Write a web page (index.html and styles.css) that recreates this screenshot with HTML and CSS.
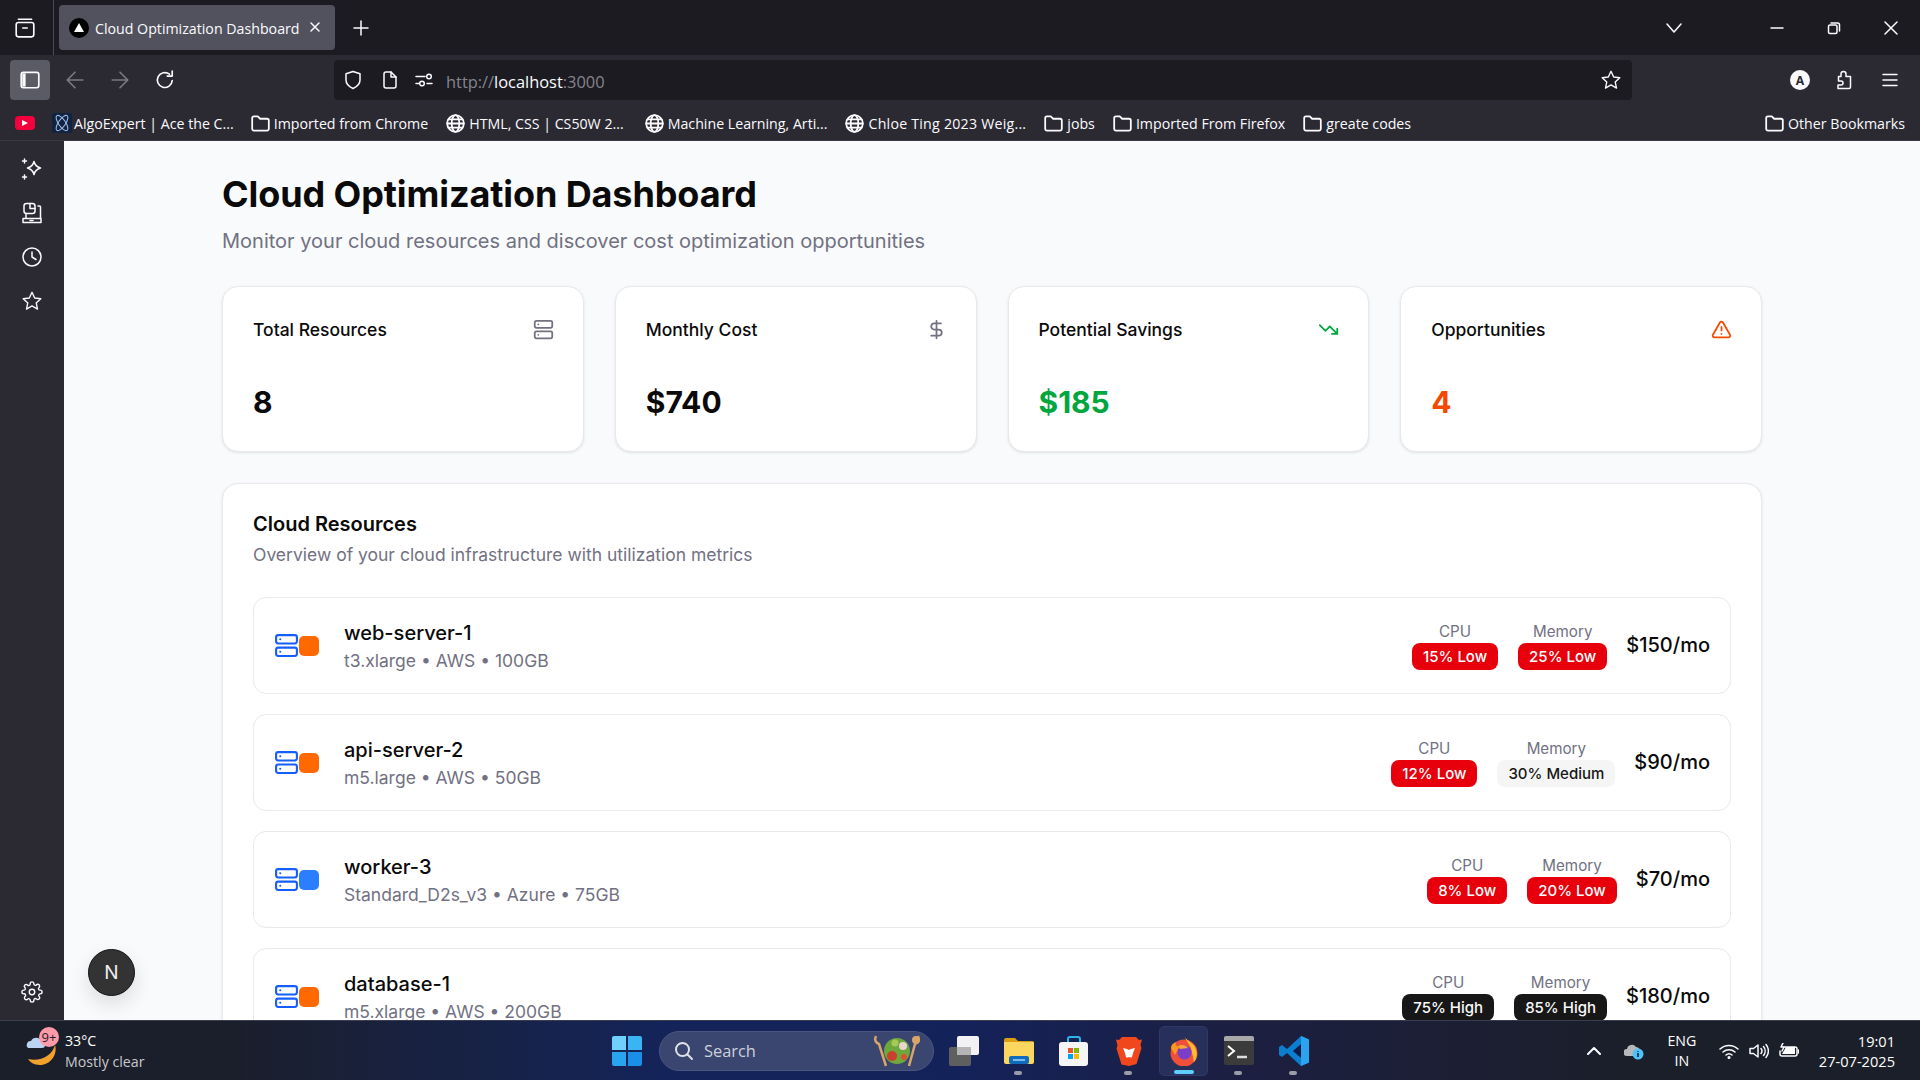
FILE: index.html
```html
<!DOCTYPE html>
<html lang="en">
<head>
	<meta charset="UTF-8">
	<title>Cloud Optimization Dashboard</title>
	<link rel="stylesheet" href="styles.css">
</head>
<body>
	<svg class="defs" width="0" height="0">
		<symbol id="server" viewBox="0 0 24 24"><rect x="2" y="2" width="20" height="8" rx="2"/><rect x="2" y="14" width="20" height="8" rx="2"/><path d="M6 6h.01M6 18h.01"/></symbol>
		<symbol id="folder" viewBox="0 0 16 16"><path d="M1 3.500A1.500 1.500 0 0 1 2.500 2h3.200l2 2h5.800A1.500 1.500 0 0 1 15 5.500v7a1.500 1.500 0 0 1-1.500 1.500h-11A1.500 1.500 0 0 1 1 12.500z"/></symbol>
		<symbol id="globe" viewBox="0 0 16 16"><circle cx="8" cy="8" r="7"/><ellipse cx="8" cy="8" rx="3.200" ry="7"/><path d="M1 8h14M2 4.500h12M2 11.500h12"/></symbol>
		<symbol id="star" viewBox="0 0 24 24"><path d="M12 2.500l2.900 6.200 6.700.800-5 4.600 1.400 6.700-6-3.400-6 3.400 1.400-6.700-5-4.600 6.700-.800z"/></symbol>
	</svg>

	<div class="tabbar">
		<svg class="ico tab-list" viewBox="0 0 20 20"><rect x="2" y="5" width="16" height="13" rx="2"/><path d="M4 2h12M8 10h4"/></svg>
		<div class="tab">
			<span class="favicon"><i></i></span>
			<span class="tab-title">Cloud Optimization Dashboard</span>
			<svg class="ico tab-close" viewBox="0 0 12 12"><path d="M2 2l8 8M10 2l-8 8"/></svg>
		</div>
		<svg class="ico new-tab" viewBox="0 0 16 16"><path d="M8 1v14M1 8h14"/></svg>
		<svg class="ico all-tabs" viewBox="0 0 16 16"><path d="M1 4l7 8 7-8"/></svg>
		<svg class="ico win-min" viewBox="0 0 14 14"><path d="M1 7h12"/></svg>
		<svg class="ico win-max" viewBox="0 0 14 14"><rect x="1.500" y="4" width="8.500" height="8.500" rx="1.500"/><path d="M4 2h6.500A2 2 0 0 1 12.500 4v6"/></svg>
		<svg class="ico win-close" viewBox="0 0 14 14"><path d="M1 1l12 12M13 1L1 13"/></svg>
	</div>

	<div class="navbar">
		<span class="side-toggle"><svg class="ico" viewBox="0 0 20 20"><rect x="2" y="3" width="16" height="14" rx="2"/><rect x="3" y="4" width="3" height="12" class="solid"/></svg></span>
		<svg class="ico nav-btn dim" viewBox="0 0 18 18"><path d="M16 9H2M9 2L2 9l7 7"/></svg>
		<svg class="ico nav-btn dim" viewBox="0 0 18 18"><path d="M2 9h14M9 2l7 7-7 7"/></svg>
		<svg class="ico nav-btn" viewBox="0 0 18 18"><path d="M15.500 9.500A6.700 6.700 0 1 1 13 3.800M15.500 1v4.500H11"/></svg>
		<div class="urlbar">
			<svg class="ico u-shield" viewBox="0 0 18 20"><path d="M9 1.500l7 2.300v6.200c0 4-3.200 6.800-7 8.500-3.800-1.700-7-4.500-7-8.500V3.800z"/></svg>
			<svg class="ico u-page" viewBox="0 0 16 18"><path d="M2 3a2 2 0 0 1 2-2h5l5 5v9a2 2 0 0 1-2 2H4a2 2 0 0 1-2-2z"/><path d="M9 1v5h5"/></svg>
			<svg class="ico u-perm" viewBox="0 0 18 14"><path d="M1 3.500h9M1 10.500h3M12 10.500h5"/><circle cx="14" cy="3.500" r="2.300"/><circle cx="7" cy="10.500" r="2.300"/></svg>
			<span class="url"><span>http://</span>localhost<span>:3000</span></span>
			<svg class="ico u-star"><use href="#star"/></svg>
		</div>
		<span class="account">A</span>
		<svg class="ico nav-ext" viewBox="0 0 18 20"><path d="M2 18.500h11a1.500 1.500 0 0 0 1.500-1.500V6.500H10V4a2.500 2.500 0 0 0-5 0v2.500H2.500V11H5a2 2 0 0 1 0 4H2z"/></svg>
		<svg class="ico nav-menu" viewBox="0 0 16 14"><path d="M1 1.500h14M1 7h14M1 12.500h14"/></svg>
	</div>

	<div class="bookmarks">
		<span class="yt"><i></i></span>
		<span class="bm bm-algo"><svg class="algo" viewBox="0 0 20 20"><rect width="20" height="20" rx="2" fill="#10243f"/><g fill="none" stroke="#9fb9e6" stroke-width="1.100"><ellipse cx="10" cy="10" rx="3.500" ry="9" transform="rotate(35 10 10)"/><ellipse cx="10" cy="10" rx="3.500" ry="9" transform="rotate(-35 10 10)"/></g></svg>AlgoExpert | Ace the C...</span>
		<span class="bm"><svg class="ico bm-ico"><use href="#folder"/></svg>Imported from Chrome</span>
		<span class="bm bm-html"><svg class="ico bm-ico"><use href="#globe"/></svg>HTML, CSS | CS50W 2...</span>
		<span class="bm"><svg class="ico bm-ico"><use href="#globe"/></svg>Machine Learning, Arti...</span>
		<span class="bm bm-chloe"><svg class="ico bm-ico"><use href="#globe"/></svg>Chloe Ting 2023 Weig...</span>
		<span class="bm"><svg class="ico bm-ico"><use href="#folder"/></svg>jobs</span>
		<span class="bm"><svg class="ico bm-ico"><use href="#folder"/></svg>Imported From Firefox</span>
		<span class="bm"><svg class="ico bm-ico"><use href="#folder"/></svg>greate codes</span>
		<span class="bm bm-other"><svg class="ico bm-ico"><use href="#folder"/></svg>Other Bookmarks</span>
	</div>

	<div class="window">
		<div class="sidebar">
			<svg class="ico side-ico" viewBox="0 0 22 22"><path d="M13 3.500c.8 3.700 2.400 5.300 6.500 6.500-4.100 1.200-5.700 2.800-6.500 6.500-.8-3.700-2.400-5.300-6.500-6.500 4.100-1.200 5.700-2.800 6.500-6.500zM3.500 1v4M1.500 3h4M3.500 17v4M1.500 19h4"/></svg>
			<svg class="ico side-ico" viewBox="0 0 22 22"><rect x="3" y="1.500" width="11" height="10" rx="2.500"/><path d="M9 1.500v5H14M17 4h1.500a1 1 0 0 1 1 1v11M5 11.500V16"/><path d="M2 20.500h18v-4H2z"/><path d="M9 18.500h3"/></svg>
			<svg class="ico side-ico" viewBox="0 0 22 22"><circle cx="11" cy="11" r="9"/><path d="M11 6v5l4 2.500"/></svg>
			<svg class="ico side-ico"><use href="#star"/></svg>
			<svg class="ico side-ico side-gear" viewBox="0 0 24 24"><circle cx="12" cy="12" r="3"/><path d="M19.400 15a1.650 1.650 0 0 0 .33 1.820l.06.06a2 2 0 1 1-2.830 2.830l-.06-.06a1.650 1.650 0 0 0-2.820 1.170V21a2 2 0 0 1-4 0v-.09a1.650 1.650 0 0 0-2.820-1.170l-.06.06a2 2 0 1 1-2.830-2.830l.06-.06A1.650 1.650 0 0 0 3.090 14H3a2 2 0 0 1 0-4h.09a1.650 1.650 0 0 0 1.170-2.820l-.06-.06a2 2 0 1 1 2.830-2.830l.06.06A1.650 1.650 0 0 0 10 3.090V3a2 2 0 0 1 4 0v.09a1.650 1.650 0 0 0 2.820 1.170l.06-.06a2 2 0 1 1 2.830 2.830l-.06.06A1.650 1.650 0 0 0 20.910 10H21a2 2 0 0 1 0 4h-.09a1.650 1.650 0 0 0-1.510 1z"/></svg>
		</div>

		<div class="page">
			<div class="container">
				<h1>Cloud Optimization Dashboard</h1>
				<p class="lead">Monitor your cloud resources and discover cost optimization opportunities</p>

				<div class="stats">
					<div class="card stat">
						<div class="stat-head">Total Resources<svg class="lu gray"><use href="#server"/></svg></div>
						<div class="stat-value">8</div>
					</div>
					<div class="card stat">
						<div class="stat-head">Monthly Cost<svg class="lu gray" viewBox="0 0 24 24"><path d="M12 2v20M17 5H9.500a3.500 3.500 0 0 0 0 7h5a3.500 3.500 0 0 1 0 7H6"/></svg></div>
						<div class="stat-value">$740</div>
					</div>
					<div class="card stat">
						<div class="stat-head">Potential Savings<svg class="lu green" viewBox="0 0 24 24"><path d="M22 17l-8.500-8.500-5 5L2 7M16 17h6v-6"/></svg></div>
						<div class="stat-value green-text">$185</div>
					</div>
					<div class="card stat">
						<div class="stat-head">Opportunities<svg class="lu orange" viewBox="0 0 24 24"><path d="M21.700 18l-8-14a2 2 0 0 0-3.500 0l-8 14A2 2 0 0 0 4 21h16a2 2 0 0 0 1.700-3zM12 9v4M12 17h.01"/></svg></div>
						<div class="stat-value orange-text">4</div>
					</div>
				</div>

				<div class="card resources">
					<h2>Cloud Resources</h2>
					<p class="sub">Overview of your cloud infrastructure with utilization metrics</p>

					<div class="row">
						<svg class="lu blue row-server"><use href="#server"/></svg>
						<span class="provider aws"></span>
						<div class="row-info">
							<div class="row-name">web-server-1</div>
							<div class="row-meta">t3.xlarge • AWS • 100GB</div>
						</div>
						<div class="metric"><span>CPU</span><b class="badge low">15% Low</b></div>
						<div class="metric"><span>Memory</span><b class="badge low">25% Low</b></div>
						<div class="price">$150/mo</div>
					</div>

					<div class="row">
						<svg class="lu blue row-server"><use href="#server"/></svg>
						<span class="provider aws"></span>
						<div class="row-info">
							<div class="row-name">api-server-2</div>
							<div class="row-meta">m5.large • AWS • 50GB</div>
						</div>
						<div class="metric"><span>CPU</span><b class="badge low">12% Low</b></div>
						<div class="metric"><span>Memory</span><b class="badge medium">30% Medium</b></div>
						<div class="price">$90/mo</div>
					</div>

					<div class="row">
						<svg class="lu blue row-server"><use href="#server"/></svg>
						<span class="provider azure"></span>
						<div class="row-info">
							<div class="row-name">worker-3</div>
							<div class="row-meta">Standard_D2s_v3 • Azure • 75GB</div>
						</div>
						<div class="metric"><span>CPU</span><b class="badge low">8% Low</b></div>
						<div class="metric"><span>Memory</span><b class="badge low">20% Low</b></div>
						<div class="price">$70/mo</div>
					</div>

					<div class="row">
						<svg class="lu blue row-server"><use href="#server"/></svg>
						<span class="provider aws"></span>
						<div class="row-info">
							<div class="row-name">database-1</div>
							<div class="row-meta">m5.xlarge • AWS • 200GB</div>
						</div>
						<div class="metric"><span>CPU</span><b class="badge high">75% High</b></div>
						<div class="metric"><span>Memory</span><b class="badge high">85% High</b></div>
						<div class="price">$180/mo</div>
					</div>
				</div>
			</div>
			<span class="next-badge">N</span>
		</div>
	</div>

	<div class="taskbar">
		<div class="weather">
			<svg class="weather-ico" viewBox="0 0 36 36"><path d="M31 12c3 10-5 20-15 20-6 0-10-3-12-6 12 3 24-3 27-14z" fill="#f2a22c"/><path d="M4 15a4 4 0 0 1 3-7 6 6 0 0 1 11 1 3 3 0 0 1 0 6z" fill="#bcd2f2"/></svg>
			<span class="weather-badge">9+</span>
			<div class="weather-text"><div>33°C</div><div class="weather-sub">Mostly clear</div></div>
		</div>

		<div class="task-center">
			<svg class="t-start" viewBox="0 0 30 30"><path d="M0 2a2 2 0 0 1 2-2h12v14H0z" fill="#6fd0fb"/><path d="M16 0h12a2 2 0 0 1 2 2v12H16z" fill="#3ab4f5"/><path d="M0 16h14v14H2a2 2 0 0 1-2-2z" fill="#29a4ef"/><path d="M16 16h14v12a2 2 0 0 1-2 2H16z" fill="#1a8fe8"/></svg>
			<div class="search">
				<svg class="search-ico" viewBox="0 0 20 20"><circle cx="8.500" cy="8.500" r="6.500"/><path d="M13.500 13.500L18 18"/></svg>
				<span>Search</span>
				<svg class="salad" viewBox="0 0 52 34"><path d="M5 2c-2 4 0 7 3 8l7 22" stroke="#d9a46a" stroke-width="2.500" fill="none"/><path d="M47 2c2 4-1 8-3 8l-6 22" stroke="#d9a46a" stroke-width="2.500" fill="none"/><circle cx="45" cy="6" r="4" fill="#d9a46a"/><circle cx="26" cy="17" r="13" fill="#6ea83c"/><circle cx="21" cy="22" r="5" fill="#c9402c"/><circle cx="32" cy="12" r="4" fill="#e8d5d0"/><circle cx="33" cy="23" r="3" fill="#e0512f"/><circle cx="24" cy="9" r="3.500" fill="#a8c85a"/></svg>
			</div>
			<div class="t-app">
				<svg viewBox="0 0 30 30"><rect x="0" y="11" width="22" height="19" rx="2" fill="#5f5f5f"/><rect x="8" y="0" width="22" height="19" rx="2" fill="#f2f2f4"/><rect x="8" y="11" width="14" height="8" fill="#b5b5b5"/></svg>
			</div>
			<div class="t-app open">
				<svg viewBox="0 0 30 30"><path d="M0 4a2 2 0 0 1 2-2h9l3 3h14a2 2 0 0 1 2 2v3H0z" fill="#d9a016"/><path d="M0 6h30v20a2 2 0 0 1-2 2H2a2 2 0 0 1-2-2z" fill="#fcd75f"/><rect x="5" y="20" width="20" height="8" rx="2" fill="#0f6cbd"/><path d="M9 24h12" stroke="#9fd3f7" stroke-width="1.500"/></svg>
			</div>
			<div class="t-app">
				<svg viewBox="0 0 30 30"><path d="M9 8V3a2 2 0 0 1 2-2h8a2 2 0 0 1 2 2v5" fill="none" stroke="#2cb5e8" stroke-width="2"/><rect x="0" y="6" width="29" height="24" rx="3" fill="#f5f5f5"/><rect x="9" y="12" width="5" height="5" fill="#e8552b"/><rect x="15" y="12" width="5" height="5" fill="#7fb900"/><rect x="9" y="18" width="5" height="5" fill="#00a1f1"/><rect x="15" y="18" width="5" height="5" fill="#ffb900"/></svg>
			</div>
			<div class="t-app open">
				<svg viewBox="0 0 30 30"><path d="M8 1h14l3 3 3-.500-1.500 5.500 1 3-5 16L15 30l-7.500-1.500-5-16 1-3L2 3.500 5 4z" fill="#f1471d"/><path d="M9 12l4 1 2 1 2-1 4-1-2 5-1 4-3 3-3-3-1-4z" fill="#fff"/><path d="M12 22l3 3 3-3-3-1z" fill="#f1471d"/></svg>
			</div>
			<div class="t-app active">
				<svg viewBox="0 0 30 30"><circle cx="15" cy="17" r="13.500" fill="#f0503a"/><path d="M15 0c2 4 8 6 11 11 3 6 2 12-1 15l-3-14z" fill="#ffbd2e"/><path d="M2 12c0-3 2-5 5-6-1 3 0 4 3 5l-4 8z" fill="#ff9a1f"/><circle cx="15.500" cy="16.500" r="7" fill="#7a3fc9"/><path d="M9 10c4-2 8-1 10 2l-8 1z" fill="#ffa53a"/></svg>
			</div>
			<div class="t-app open">
				<svg viewBox="0 0 30 30"><rect width="30" height="29" rx="2" fill="#3b3b3b"/><path d="M0 2a2 2 0 0 1 2-2h26a2 2 0 0 1 2 2v3H0z" fill="#a8a8a8"/><path d="M4 10l6 5-6 5" stroke="#fff" stroke-width="2" fill="none"/><path d="M13 21h10" stroke="#ddd" stroke-width="2.500"/></svg>
			</div>
			<div class="t-app open">
				<svg viewBox="0 0 30 30"><path d="M22 0l8 3.500v23L22 30 8 17l-5 4-3-2v-8l3-2 5 4z" fill="#0a7fd0"/><path d="M22 8l-8 7 8 7z" fill="#0f1b45"/><path d="M22 0l8 3.500v23L22 30z" fill="#2ba3ee"/></svg>
			</div>
		</div>

		<div class="tray">
			<svg class="ico tray-chev" viewBox="0 0 14 8"><path d="M1 7l6-6 6 6"/></svg>
			<svg class="tray-cloud" viewBox="0 0 20 18"><path d="M3 14a3.500 3.500 0 0 1 0-7 5 5 0 0 1 9-2 4 4 0 0 1 4 5v4z" fill="#b8b8bc"/><circle cx="14" cy="12" r="5.500" fill="#4fc3f7"/><path d="M14 11v4M14 9v.8" stroke="#10202c" stroke-width="1.500"/></svg>
			<div class="tray-lang"><div>ENG</div><div>IN</div></div>
			<svg class="ico tray-wifi" viewBox="0 0 20 16"><path d="M1 6a13 13 0 0 1 18 0M4 9a9 9 0 0 1 12 0M7 12a4.500 4.500 0 0 1 6 0"/><circle cx="10" cy="14.500" r=".8"/></svg>
			<svg class="ico tray-sound" viewBox="0 0 20 16"><path d="M1 5.500h3.500L9 2v12l-4.500-3.500H1zM12 5.500a4 4 0 0 1 0 5M14.500 3.500a7 7 0 0 1 0 9M17 1.500a10 10 0 0 1 0 13"/></svg>
			<svg class="ico tray-batt" viewBox="0 0 20 16"><path d="M5 4h11a2 2 0 0 1 2 2v5a2 2 0 0 1-2 2H3a2 2 0 0 1-2-2V8"/><path d="M3 11l4-7h9v7z" fill="#fff" stroke="none"/><path d="M19.500 7v3M4 0L2 4h3L3 8"/></svg>
			<div class="clock"><div>19:01</div><div>27-07-2025</div></div>
		</div>
	</div>
</body>
</html>
```

FILE: styles.css
```css
* {
	box-sizing: border-box;
}
html, body {
	margin: 0;
	height: 100%;
	overflow: hidden;
}
body {
	display: flex;
	flex-direction: column;
	height: 1080px;
	background: #2b2a33;
	font-family: "Inter", "Liberation Sans", sans-serif;
	color: #0a0a0a;
}
.defs {
	position: absolute;
}
.ico {
	display: block;
	flex: none;
	fill: none;
	stroke: #fbfbfe;
	stroke-width: 1.5;
	stroke-linecap: round;
	stroke-linejoin: round;
}

/* browser chrome */
.tabbar {
	display: flex;
	align-items: center;
	height: 55px;
	flex: none;
	background: #1c1b22;
	color: #fbfbfe;
	font-family: "Open Sans", sans-serif;
}
.tab-list {
	width: 22px;
	height: 22px;
	margin-left: 14px;
}
.tab {
	display: flex;
	align-items: center;
	width: 276px;
	height: 45px;
	margin-left: 23px;
	padding: 0 14px 0 10px;
	background: #52525e;
	border-radius: 4px;
	font-size: 14.2px;
	position: relative;
}
.tab::before {
	content: "";
	position: absolute;
	left: -6px;
	top: -5px;
	height: 55px;
	border-left: 1px solid #4a4a52;
}
.favicon {
	display: flex;
	align-items: center;
	justify-content: center;
	width: 20px;
	height: 20px;
	margin-right: 6px;
	border-radius: 50%;
	background: #000;
}
.favicon i {
	border-left: 5px solid transparent;
	border-right: 5px solid transparent;
	border-bottom: 9px solid #fff;
}
.tab-title {
	flex: 1;
	padding-top: 2px;
	white-space: nowrap;
}
.tab-close {
	width: 12px;
	height: 12px;
	margin-top: -2px;
}
.new-tab {
	width: 16px;
	height: 16px;
	margin-left: 18px;
}
.all-tabs {
	width: 16px;
	height: 16px;
	margin-left: auto;
}
.win-min, .win-max, .win-close {
	width: 14px;
	height: 14px;
}
.win-min {
	margin-left: 88px;
}
.win-max, .win-close {
	margin-left: 43px;
}
.win-close {
	margin-right: 22px;
}

.navbar {
	display: flex;
	align-items: center;
	height: 45px;
	flex: none;
	padding-top: 5px;
	background: #2b2a33;
}
.side-toggle {
	display: flex;
	align-items: center;
	justify-content: center;
	width: 40px;
	height: 40px;
	margin-left: 10px;
	background: #5b5b66;
	border-radius: 4px;
}
.side-toggle .ico {
	width: 22px;
	height: 22px;
}
.solid {
	fill: #fbfbfe;
	stroke: none;
}
.nav-btn {
	width: 20px;
	height: 20px;
	margin-left: 25px;
}
.side-toggle + .nav-btn {
	margin-left: 15px;
}
.nav-btn.dim {
	stroke: #7a7a80;
}
.urlbar {
	display: flex;
	align-items: center;
	width: 1298px;
	height: 40px;
	margin-left: 159px;
	padding: 0 10px 0 10px;
	background: #1c1b22;
	border-radius: 4px;
	font-family: "Open Sans", sans-serif;
	font-size: 16.4px;
	color: #fbfbfe;
}
.u-shield {
	width: 18px;
	height: 20px;
}
.u-page {
	width: 16px;
	height: 18px;
	margin-left: 20px;
}
.u-perm {
	width: 18px;
	height: 14px;
	margin-left: 17px;
}
.url {
	margin-left: 13px;
	padding-top: 2px;
}
.url span {
	color: #85858b;
}
.u-star {
	width: 22px;
	height: 22px;
	margin-left: auto;
}
.account {
	display: flex;
	align-items: center;
	justify-content: center;
	width: 20px;
	height: 20px;
	margin-left: 158px;
	border-radius: 50%;
	background: #fbfbfe;
	color: #2b2a33;
	font-size: 12px;
	font-weight: 700;
}
.nav-ext {
	width: 18px;
	height: 20px;
	margin-left: 26px;
}
.nav-menu {
	width: 16px;
	height: 14px;
	margin-left: 28px;
}

.bookmarks {
	display: flex;
	align-items: center;
	gap: 18px;
	height: 40px;
	flex: none;
	padding: 6px 15px 0 15px;
	background: #2b2a33;
	font-family: "Open Sans", sans-serif;
	font-size: 14.2px;
	color: #fbfbfe;
	white-space: nowrap;
}
.yt {
	display: flex;
	align-items: center;
	justify-content: center;
	width: 20px;
	height: 14px;
	border-radius: 4px;
	background: #f5003d;
}
.yt i {
	border-left: 6px solid #fff;
	border-top: 3.5px solid transparent;
	border-bottom: 3.5px solid transparent;
}
.bm {
	display: flex;
	align-items: center;
	gap: 4px;
}
.bm-ico {
	width: 19px;
	height: 19px;
}
.algo {
	width: 20px;
	height: 20px;
}
.bm-algo {
	gap: 2px;
	margin-left: -1px;
	margin-right: -1px;
}
.bm-html {
	margin-right: 3px;
}
.bm-chloe {
	letter-spacing: 0.23px;
}
.bm-other {
	margin-left: auto;
}

/* app area */
.window {
	display: flex;
	flex: 1;
	min-height: 0;
	border-top: 1px solid #3a3944;
}
.sidebar {
	display: flex;
	flex-direction: column;
	align-items: center;
	gap: 22px;
	width: 64px;
	flex: none;
	padding-top: 17px;
	padding-bottom: 17px;
	background: #2b2a33;
}
.side-ico {
	width: 22px;
	height: 22px;
}
.side-gear {
	margin-top: auto;
}
.page {
	flex: 1;
	min-width: 0;
	overflow: hidden;
	position: relative;
	background: #f9fafb;
}
.container {
	width: 1540px;
	margin: 0 auto;
	padding-top: 31px;
}
h1 {
	margin: 0;
	font-size: 36px;
	line-height: 44px;
	font-weight: 700;
	letter-spacing: -0.1px;
}
.lead {
	margin: 11px 0 0 0;
	font-size: 20px;
	line-height: 28px;
	color: #717182;
}
.card {
	background: #fff;
	border: 1px solid #e9e9ec;
	border-radius: 16px;
	box-shadow: 0 1px 3px rgba(0,0,0,0.1);
}
.stats {
	display: grid;
	grid-template-columns: repeat(4, 1fr);
	gap: 31px;
	margin-top: 31px;
}
.stat {
	height: 166px;
	padding: 30px;
}
.stat-head {
	display: flex;
	align-items: center;
	justify-content: space-between;
	height: 22px;
	margin-top: 1px;
	font-size: 17.5px;
	font-weight: 500;
}
.stat-head .lu {
	width: 21px;
	height: 21px;
	margin-right: -1px;
}
.lu {
	display: block;
	flex: none;
	width: 22px;
	height: 22px;
	fill: none;
	stroke-width: 2;
	stroke-linecap: round;
	stroke-linejoin: round;
}
.gray {
	stroke: #717182;
}
.green {
	stroke: #00a63e;
}
.orange {
	stroke: #f54900;
}
.blue {
	stroke: #155dfc;
}
.stat-value {
	margin-top: 44px;
	font-size: 30px;
	line-height: 36px;
	font-weight: 700;
}
.green-text {
	color: #00a63e;
}
.orange-text {
	color: #f54900;
}
.resources {
	margin-top: 31px;
	padding: 30px;
	height: 800px;
}
h2 {
	margin: 0;
	font-size: 20px;
	line-height: 20px;
	font-weight: 600;
}
.sub {
	margin: 9px 0 0 0;
	font-size: 17.5px;
	line-height: 24px;
	color: #717182;
}
.row {
	display: flex;
	align-items: center;
	height: 97px;
	margin-top: 20px;
	padding: 0 20px;
	background: #fff;
	border: 1px solid #e9e9ec;
	border-radius: 13px;
}
.sub + .row {
	margin-top: 30px;
}
.row-server {
	width: 25px;
	height: 25px;
}
.provider {
	width: 20px;
	height: 20px;
	border-radius: 5px;
}
.aws {
	background: #ff6900;
}
.azure {
	background: #2b7fff;
}
.row-info {
	flex: 1;
	margin-left: 25px;
}
.row-name {
	font-size: 20px;
	line-height: 29px;
	font-weight: 500;
}
.row-meta {
	font-size: 17.5px;
	line-height: 25px;
	color: #717182;
}
.metric {
	display: flex;
	flex-direction: column;
	align-items: center;
	margin-left: 20px;
	font-size: 15.2px;
	line-height: 20px;
	color: #717182;
}
.badge {
	display: block;
	height: 27px;
	margin-top: 1px;
	padding: 0 11px;
	border-radius: 8px;
	font-size: 15px;
	line-height: 27px;
	font-weight: 500;
	white-space: nowrap;
}
.low {
	background: #e7000b;
	color: #fff;
}
.medium {
	background: #f5f5f5;
	color: #171717;
}
.high {
	background: #171717;
	color: #fafafa;
}
.price {
	margin-left: 19px;
	margin-top: -2px;
	font-size: 20px;
	font-weight: 500;
}
.next-badge {
	position: absolute;
	left: 24px;
	top: 808px;
	display: flex;
	align-items: center;
	justify-content: center;
	width: 47px;
	height: 47px;
	border-radius: 50%;
	background: #333;
	border: 1px solid #111;
	box-shadow: 0 0 0 1px rgba(255,255,255,0.1), 0 8px 20px rgba(0,0,0,0.12);
	color: #eee;
	font-size: 19px;
	font-weight: 400;
}

/* windows taskbar */
.taskbar {
	display: flex;
	align-items: center;
	height: 60px;
	flex: none;
	position: relative;
	background: linear-gradient(90deg, #1b1f2a 0%, #1b1f2c 12%, #14245a 35%, #14225a 50%, #1c1f40 65%, #1b1f2a 85%);
	border-top: 1px solid #3a3e4e;
	color: #fff;
	font-family: "Open Sans", sans-serif;
	font-size: 14.2px;
}
.weather {
	display: flex;
	align-items: center;
	width: 612px;
	padding-left: 24px;
	position: relative;
}
.weather-ico {
	width: 36px;
	height: 36px;
}
.weather-badge {
	position: absolute;
	left: 39px;
	top: -3px;
	width: 20px;
	height: 20px;
	border-radius: 50%;
	background: #ff9aa8;
	color: #1b1f2a;
	font-size: 13px;
	line-height: 20px;
	text-align: center;
}
.weather-text {
	margin-left: 5px;
	line-height: 21px;
}
.weather-sub {
	color: #c9c9cc;
}
.task-center {
	display: flex;
	align-items: center;
}
.t-start {
	width: 30px;
	height: 30px;
}
.search {
	display: flex;
	align-items: center;
	width: 275px;
	height: 40px;
	margin-left: 17px;
	padding: 0 10px 0 14px;
	border-radius: 20px;
	background: #3a4570;
	border: 1px solid #4a5580;
	font-size: 16.4px;
	color: #ccd0dc;
}
.search-ico {
	width: 20px;
	height: 20px;
	fill: none;
	stroke: #dfe2ea;
	stroke-width: 2;
	stroke-linecap: round;
}
.search span {
	margin-left: 10px;
}
.salad {
	width: 52px;
	height: 34px;
	margin-left: auto;
}
.t-app {
	display: flex;
	align-items: center;
	justify-content: center;
	width: 49px;
	height: 50px;
	margin-left: 6px;
	border-radius: 5px;
	position: relative;
}
.search + .t-app {
	margin-left: 5px;
}
.t-app svg {
	width: 30px;
	height: 30px;
}
.t-app.open::after, .t-app.active::after {
	content: "";
	position: absolute;
	left: 20px;
	bottom: 1px;
	width: 8px;
	height: 4px;
	border-radius: 2px;
	background: #9a9da8;
}
.t-app.active {
	background: #27305a;
	border: 1px solid #2f3866;
}
.t-app.active::after {
	left: 14px;
	width: 20px;
	background: #60cdff;
}
.tray {
	display: flex;
	align-items: center;
	position: absolute;
	right: 25px;
	top: 0;
	height: 59px;
}
.tray-chev {
	width: 14px;
	height: 8px;
	stroke-width: 2;
}
.tray-cloud {
	width: 20px;
	height: 18px;
	margin-left: 23px;
}
.tray-lang {
	margin-left: 20px;
	width: 36px;
	text-align: center;
	line-height: 20px;
}
.tray-wifi, .tray-sound, .tray-batt {
	width: 20px;
	height: 16px;
}
.tray-wifi {
	margin-left: 19px;
}
.tray-sound, .tray-batt {
	margin-left: 10px;
}
.clock {
	margin-left: 20px;
	font-size: 14.6px;
	text-align: right;
	line-height: 20px;
}
```
